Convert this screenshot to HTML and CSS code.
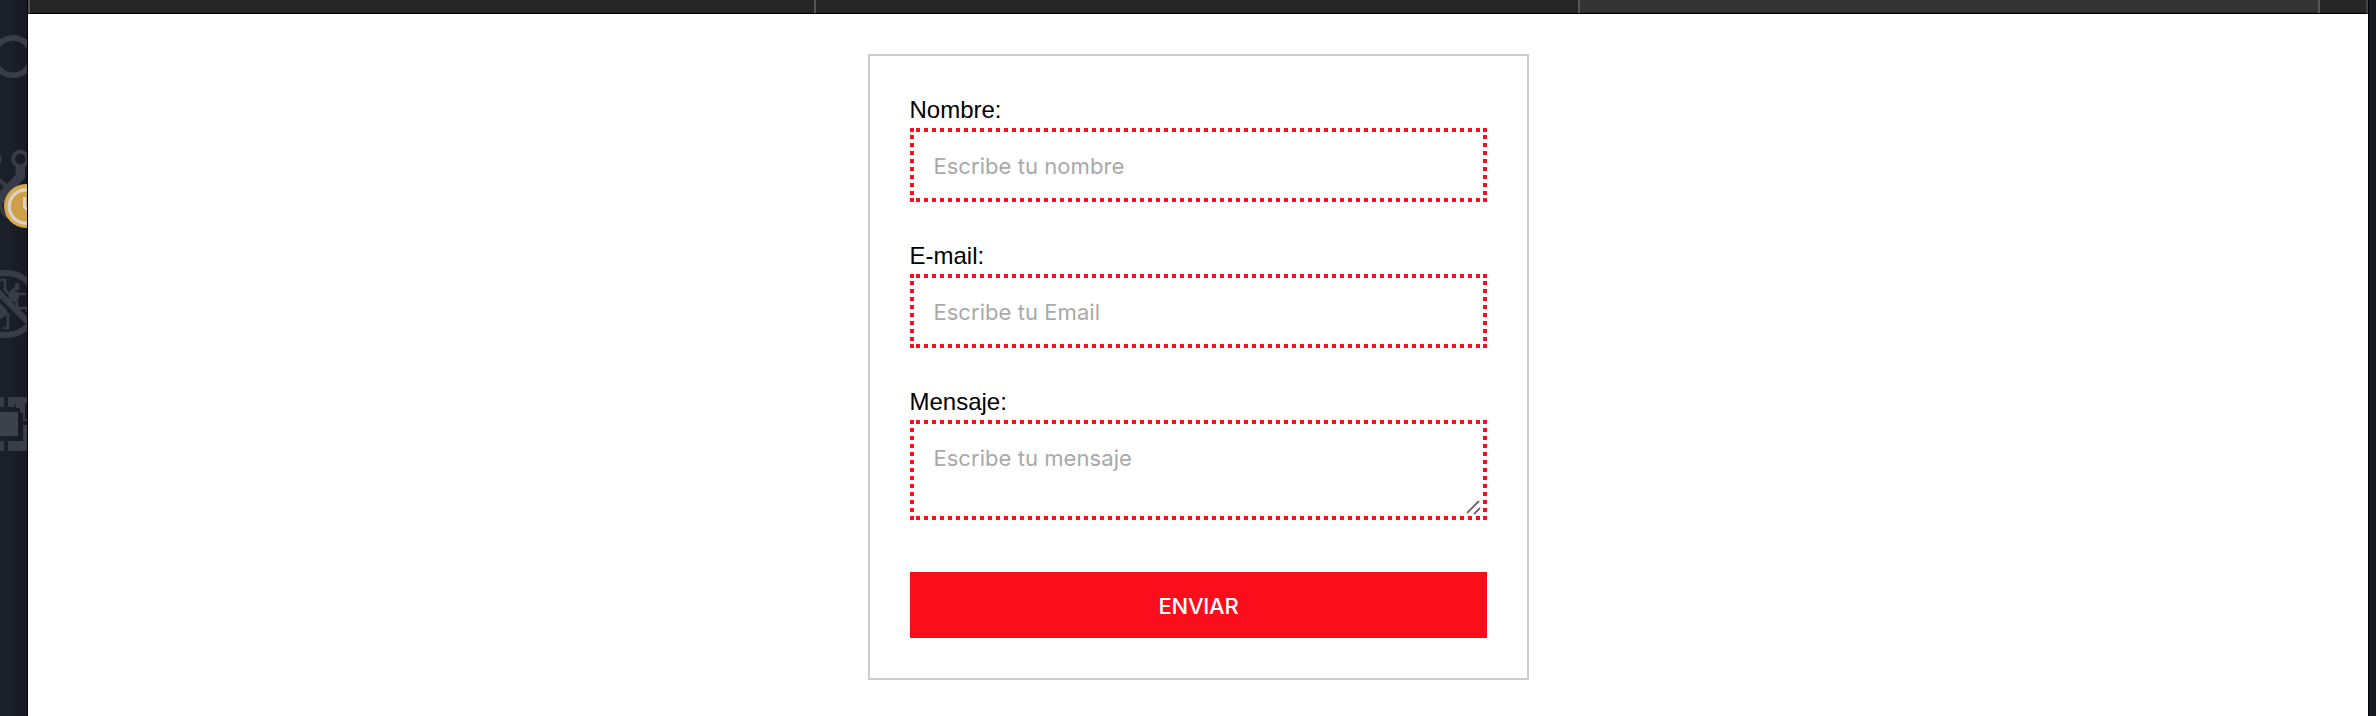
FILE: index.html
```html
<!DOCTYPE html>
<html lang="es">
<head>
<meta charset="utf-8">
<title>Formulario</title>
<link rel="stylesheet" href="styles.css">
</head>
<body>
<div class="desktop">
  <aside class="wallpaper">
    <svg class="wallpaper-art" width="27" height="716" viewBox="0 0 27 716" fill="none" stroke="#383c47">
      <circle cx="13" cy="56.5" r="18.7" stroke-width="5.8"/>
      <circle cx="20.3" cy="159" r="7.2" stroke-width="4"/>
      <circle cx="-7" cy="159" r="7" stroke-width="3"/>
      <path d="M15.500 166H25V178L11 192L6 200L0 207V191L4 187L0 183V178L7 184L15.500 175Z" fill="#383c47" stroke="none"/>
      <path d="M0 200Q1 216 9 217" stroke-width="3"/>
      <circle cx="26" cy="206" r="22" fill="#d9a950" stroke="none"/>
      <circle cx="26" cy="206.500" r="16.700" fill="#cfa04a" stroke="#d8d3c9" stroke-width="3.200"/>
      <path d="M24.500 197V207L28 210" stroke="#d8d3c9" stroke-width="3"/>
      <circle cx="6" cy="304" r="31" stroke-width="6"/>
      <path d="M-3 291L28 322" stroke-width="6"/>
      <path d="M0 280H5V290L9 294L14 289H18V283M16 284V290M17 294H26M13 299L17 303V308H27M27 308V312M8 313V328H3" stroke-width="2.600"/>
      <circle cx="14" cy="296" r="5.500" fill="#383c47" stroke="none"/>
      <path d="M0 303L7 310V315L0 319Z" fill="#383c47" stroke="none"/>
      <path d="M0 412H18V436H0Z" fill="#3d414c" stroke="none"/>
      <path d="M0 397H4V407H0ZM8 397H27V403H25V413H23V407H17V404H15V407H8ZM16 404H25V413H20V408H16ZM23 413H25V419H27V421H23ZM23 425H27V451H8V441H23ZM0 441H4V451H0Z" fill="#383c47" stroke="none"/>
    </svg>
  </aside>
  <div class="window">
    <div class="tabs">
      <div class="tab tab-first"></div>
      <div class="tab tab-second"></div>
      <div class="tab tab-active"></div>
      <div class="tab tab-tools"></div>
    </div>
    <main class="page">
      <form class="card">
        <div class="group">
          <label class="label" for="nombre">Nombre:</label>
          <input class="field" id="nombre" type="text" placeholder="Escribe tu nombre">
        </div>
        <div class="group">
          <label class="label" for="email">E-mail:</label>
          <input class="field" id="email" type="text" placeholder="Escribe tu Email">
        </div>
        <div class="group group-message">
          <label class="label" for="mensaje">Mensaje:</label>
          <textarea class="field message" id="mensaje" placeholder="Escribe tu mensaje"></textarea>
          <svg class="grip" width="15" height="15" viewBox="0 0 15 15" fill="none" stroke="#666" stroke-width="1.8"><path d="M1 13L13 1M8 14L14 8"/></svg>
        </div>
        <button class="submit" type="button">ENVIAR</button>
      </form>
    </main>
  </div>
  <div class="wallpaper-edge"></div>
</div>
</body>
</html>
```
FILE: styles.css
```css
* { box-sizing: border-box; }
body { margin: 0; overflow: hidden; background: #181c24; }
.desktop { display: flex; height: 716px; }
.wallpaper {
  width: 28px;
  border-right: 1px solid #020204;
  background: linear-gradient(90deg, #1b212b, #171a22);
}
.wallpaper-art { display: block; }
.window { width: 2340px; background: #fff; }
.tabs {
  display: flex;
  height: 14px;
  border-bottom: 1px solid #000;
  border-right: 2px solid #454545;
  background: linear-gradient(#262626 0 12px, #1d1d1d 12px);
}
.tab { border-left: 2px solid #555; }
.tab-first { width: 786px; }
.tab-second { width: 764px; }
.tab-active { width: 740px; background: linear-gradient(#343434 0 12px, #222 12px); }
.tab-tools { flex: 1; }
.page { display: flex; justify-content: center; padding: 40px 0 0 1px; }
.card {
  width: 661px;
  height: 626px;
  padding: 40px;
  border: 2px solid #ccc;
  font-family: "Liberation Sans", Arial, sans-serif;
}
.group { position: relative; height: 146px; }
.group-message { height: 184px; }
.label {
  display: block;
  height: 32px;
  margin-left: -0.5px;
  font-size: 24px;
  line-height: 28px;
  color: #000;
}
.field {
  --red: #fc0d1b;
  --dot-y: 7px;
  --dot: linear-gradient(var(--red), var(--red));
  --row: linear-gradient(90deg, var(--red) 4px, transparent 4px);
  --col: linear-gradient(var(--red) 4px, transparent 4px);
  display: block;
  width: 577px;
  height: 74px;
  margin: 0;
  padding: 2px 23px 0 23.4px;
  border: 0;
  border-radius: 0;
  outline: 0;
  resize: none;
  color: #000;
  font: 22px/26px Inter, "Liberation Sans", sans-serif;
  letter-spacing: 0.06px;
  background:
    var(--dot) 0 0 / 4px 4px no-repeat,
    var(--dot) 100% 0 / 4px 4px no-repeat,
    var(--dot) 0 100% / 4px 4px no-repeat,
    var(--dot) 100% 100% / 4px 4px no-repeat,
    var(--row) 6px 0 / 8px 4px repeat-x,
    var(--row) 6px 100% / 8px 4px repeat-x,
    var(--col) 0 var(--dot-y) / 4px 8px repeat-y,
    var(--col) 100% var(--dot-y) / 4px 8px repeat-y,
    #fff;
}
.field::placeholder { color: #a9a9a9; opacity: 1; }
.message { --dot-y: 0px; height: 100px; padding-top: 25px; overflow: hidden; }
.grip { position: absolute; right: 6px; bottom: 57px; }
.submit {
  display: block;
  width: 577px;
  height: 66px;
  padding: 2px 0 0;
  border: 0;
  color: #fff;
  background: #fc0d1b;
  font: 500 22px/26px Inter, "Liberation Sans", sans-serif;
  letter-spacing: -0.2px;
}
.wallpaper-edge { flex: 1; border-left: 1px solid #020204; background: #171a22; }
```
